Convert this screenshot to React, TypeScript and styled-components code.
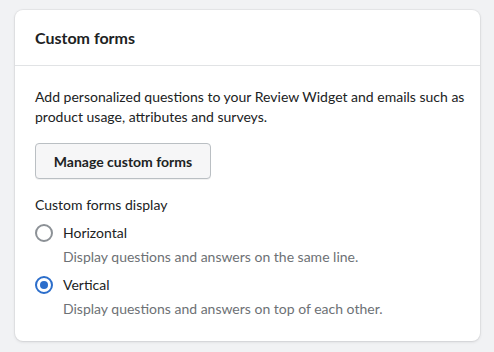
import styled, { createGlobalStyle } from "styled-components";
import { useState } from "react";

const GlobalStyle = createGlobalStyle`
  body {
    margin: 0;
    background: #f1f2f4;
    font-family: "Lato", "Open Sans", sans-serif;
    color: #202223;
  }
`;

const options = [
  {
    id: "horizontal",
    label: "Horizontal",
    help: "Display questions and answers on the same line.",
  },
  {
    id: "vertical",
    label: "Vertical",
    help: "Display questions and answers on top of each other.",
  },
];

function App() {
  const [display, setDisplay] = useState("vertical");

  return (
    <Page>
      <GlobalStyle />
      <Card>
        <Header>
          <Title>Custom forms</Title>
        </Header>
        <Body>
          <Text>
            Add personalized questions to your Review Widget and emails such as
            product usage, attributes and surveys.
          </Text>
          <Button type="button">Manage custom forms</Button>
          <Fieldset>
            <Legend>Custom forms display</Legend>
            {options.map((o) => (
              <Choice key={o.id}>
                <ChoiceRow onClick={() => setDisplay(o.id)}>
                  <Radio checked={display === o.id} />
                  <Label>{o.label}</Label>
                </ChoiceRow>
                <Help>{o.help}</Help>
              </Choice>
            ))}
          </Fieldset>
        </Body>
      </Card>
    </Page>
  );
}

export default App;

const Page = styled.div`
  padding: 10px 14px 10px 15px;
  width: 494px;
  height: 352px;
  box-sizing: border-box;
`;

const Card = styled.div`
  width: 465px;
  background: #fff;
  border-radius: 8px;
  box-shadow: 0 0 0 1px rgba(63, 63, 68, 0.05), 0 1px 3px rgba(63, 63, 68, 0.15);
`;

const Header = styled.div`
  padding: 16px 20px 0;
  height: 56px;
  box-sizing: border-box;
  border-bottom: 1px solid #e1e3e5;
`;

const Title = styled.h2`
  margin: 0;
  font-size: 16px;
  font-weight: 700;
  line-height: 24px;
`;

const Body = styled.div`
  display: flex;
  flex-direction: column;
  align-items: flex-start;
  padding: 21px 8px 22px 20px;
`;

const Text = styled.p`
  margin: 0;
  font-size: 14px;
  line-height: 20px;
`;

const Button = styled.button`
  margin-top: 16px;
  height: 36px;
  width: 176px;
  padding: 0 16px;
  font-family: inherit;
  font-size: 14px;
  font-weight: 700;
  color: #202223;
  background: #f6f6f7;
  border: 1px solid #babfc3;
  border-radius: 4px;
  box-shadow: 0 1px 0 rgba(0, 0, 0, 0.05);
  cursor: pointer;
`;

const Fieldset = styled.div`
  display: flex;
  flex-direction: column;
  margin-top: 16px;
`;

const Legend = styled.div`
  font-size: 14px;
  line-height: 20px;
  margin-bottom: 4px;
`;

const Choice = styled.div`
  display: flex;
  flex-direction: column;
  & + & {
    margin-top: 4px;
  }
`;

const ChoiceRow = styled.label`
  display: flex;
  align-items: center;
  gap: 10px;
  height: 28px;
  cursor: pointer;
`;

const Radio = styled.span<{ checked: boolean }>`
  width: 18px;
  height: 18px;
  box-sizing: border-box;
  border-radius: 50%;
  border: 2px solid ${({ checked }) => (checked ? "#2c6ecb" : "#8c9196")};
  display: flex;
  align-items: center;
  justify-content: center;
  &::after {
    content: "";
    width: 8px;
    height: 8px;
    border-radius: 50%;
    background: #2c6ecb;
    display: ${({ checked }) => (checked ? "block" : "none")};
  }
`;

const Label = styled.span`
  font-size: 14px;
  line-height: 20px;
`;

const Help = styled.div`
  padding-left: 28px;
  font-size: 14px;
  line-height: 20px;
  color: #6d7175;
`;
